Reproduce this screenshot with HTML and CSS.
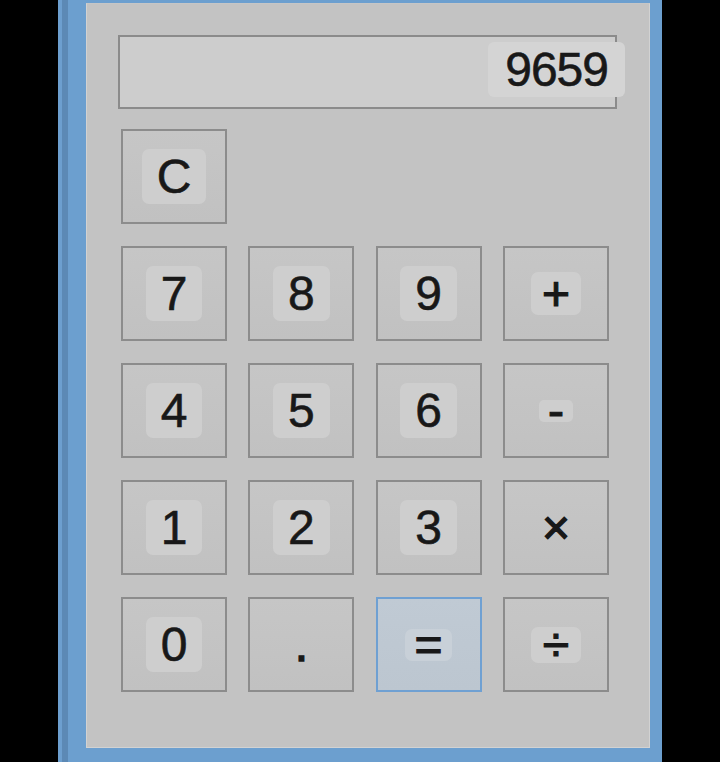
FILE: index.html
```html
<!DOCTYPE html>
<html lang="en">
<head>
<meta charset="utf-8">
<title>Calculator</title>
<link rel="stylesheet" href="styles.css">
</head>
<body>
<div class="window">
  <div class="content">
    <div class="display"><span class="display-text">9659</span></div>
    <div class="keys">
      <div class="key key-c"><span class="lbl">C</span></div>
      <div class="key"><span class="lbl">7</span></div>
      <div class="key"><span class="lbl">8</span></div>
      <div class="key"><span class="lbl">9</span></div>
      <div class="key"><span class="lbl lbl-plus">+</span></div>
      <div class="key"><span class="lbl">4</span></div>
      <div class="key"><span class="lbl">5</span></div>
      <div class="key"><span class="lbl">6</span></div>
      <div class="key"><span class="lbl lbl-minus">-</span></div>
      <div class="key"><span class="lbl">1</span></div>
      <div class="key"><span class="lbl">2</span></div>
      <div class="key"><span class="lbl">3</span></div>
      <div class="key"><span class="lbl lbl-plain">×</span></div>
      <div class="key"><span class="lbl">0</span></div>
      <div class="key"><span class="lbl lbl-plain">.</span></div>
      <div class="key key-eq"><span class="lbl lbl-eq">=</span></div>
      <div class="key"><span class="lbl lbl-div">÷</span></div>
    </div>
  </div>
</div>
</body>
</html>
```
FILE: styles.css
```css
html, body {
  margin: 0;
  padding: 0;
  background: #000;
  height: 762px;
  overflow: hidden;
}

body {
  padding-left: 58px;
  font-family: "Liberation Sans", Arial, sans-serif;
  color: #181818;
}

.window {
  box-sizing: border-box;
  width: 604px;
  height: 762px;
  padding: 3px 12px 14px 28px;
  background: linear-gradient(to right, #6d9fcf 0, #6d9fcf 4px, #5c89b5 4px, #5c89b5 10px, #6c9fcf 10px);
}

.content {
  box-sizing: border-box;
  height: 745px;
  border: 1px solid #d2d2d2;
  border-top-color: #c6c6c6;
  background: #c3c3c3;
  padding: 31px 31px 0 31px;
}

.display {
  box-sizing: border-box;
  width: 499px;
  height: 74px;
  border: 2px solid #8b8b8b;
  background: #cdcdcd;
  display: flex;
  justify-content: flex-end;
  align-items: flex-start;
}

.display-text {
  margin-top: 5px;
  margin-right: -10px;
  height: 55px;
  line-height: 55px;
  padding: 0 17px 0 17px;
  font-size: 48px;
  letter-spacing: -1px;
  -webkit-text-stroke: 0.6px #181818;
  background: #d4d4d4;
  border-radius: 6px;
}

.keys {
  margin-top: 20px;
  margin-left: 3px;
  display: grid;
  grid-template-columns: repeat(4, 106px);
  grid-auto-rows: 95px;
  column-gap: 21.3px;
  row-gap: 22px;
}

.key {
  box-sizing: border-box;
  border: 2px solid #8c8c8c;
  background: linear-gradient(#c6c6c6, #c1c1c1);
  display: flex;
  align-items: center;
  justify-content: center;
}

.key-c {
  grid-column: 1 / -1;
  justify-self: start;
  width: 106px;
}

.key-eq {
  border-color: #6fa0d2;
  background: linear-gradient(#c0cad4, #bcc6d0);
}

.lbl {
  font-size: 48px;
  height: 55px;
  line-height: 55px;
  padding: 0 15px;
  -webkit-text-stroke: 0.6px #181818;
  background: #cecece;
  border-radius: 7px;
}

.lbl-plus {
  box-sizing: border-box;
  width: 50px;
  height: 43px;
  line-height: 43px;
  padding: 0;
  text-align: center;
  -webkit-text-stroke: 1.2px #181818;
}

.lbl-minus {
  box-sizing: border-box;
  width: 34px;
  height: 22px;
  line-height: 22px;
  padding: 0;
  text-align: center;
  border-radius: 5px;
  -webkit-text-stroke: 1.2px #181818;
}

.lbl-eq {
  box-sizing: border-box;
  width: 47px;
  height: 32px;
  line-height: 32px;
  padding: 0;
  text-align: center;
  background: #c8d0d8;
  -webkit-text-stroke: 1.2px #181818;
}

.lbl-div {
  box-sizing: border-box;
  width: 50px;
  height: 36px;
  line-height: 36px;
  padding: 0;
  text-align: center;
  -webkit-text-stroke: 1.2px #181818;
}

.lbl-plain {
  background: transparent;
  -webkit-text-stroke: 1.4px #181818;
}
```
